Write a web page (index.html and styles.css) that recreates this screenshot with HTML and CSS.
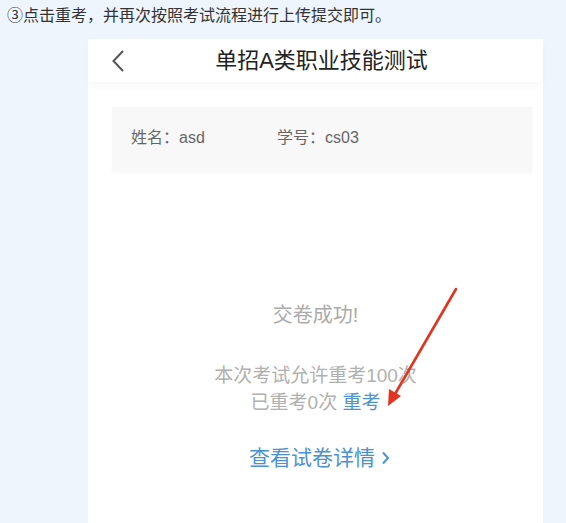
FILE: index.html
```html
<!DOCTYPE html>
<html lang="zh-CN">
<head>
  <meta charset="UTF-8" />
  <meta name="viewport" content="width=device-width, initial-scale=1.0" />
  <title>重考说明</title>
  <link rel="stylesheet" href="styles.css">
</head>
<body>
  <p class="caption">③点击重考，并再次按照考试流程进行上传提交即可。</p>

  <div class="phone">
    <header class="top-bar">
      <a href="#" class="back" title="返回">
        <svg width="12" height="22" viewBox="0 0 12 22"><polyline points="11,1 1.5,11 11,21" fill="none" stroke="#555" stroke-width="2"/></svg>
      </a>
      <h1 class="title">单招A类职业技能测试</h1>
    </header>

    <div class="info-card">
      <span class="info-item">姓名：asd</span>
      <span class="info-item">学号：cs03</span>
    </div>

    <section class="result">
      <p class="result-title">交卷成功!</p>
      <p class="retake-text">本次考试允许重考100次</p>
      <p class="retake-text">已重考0次 <a href="#" class="retake-link">重考</a></p>
      <a href="#" class="detail-link">查看试卷详情
        <svg width="9" height="14" viewBox="0 0 9 14"><polyline points="2,1.5 7,7 2,12.5" fill="none" stroke="#4b92cf" stroke-width="2"/></svg>
      </a>
    </section>

    <!-- red annotation arrow -->
    <svg class="arrow" width="566" height="523" viewBox="0 0 566 523">
      <line x1="456" y1="289" x2="395" y2="394" stroke="#e2341f" stroke-width="2.6" stroke-linecap="round"/>
      <polygon points="388,406 389,389 401,396" fill="#e2341f"/>
    </svg>
  </div>
</body>
</html>
```

FILE: styles.css
```css
:root {
  --bg: #eef5fd;
  --text: #333;
  --muted: #aaa;
  --blue: #4b92cf;
  --card: #f8f8f8;
}

body {
  margin: 0;
  background: var(--bg);
  font-family: "Liberation Sans", "Noto Sans CJK SC", sans-serif;
  color: var(--text);
  height: 523px;
  overflow: hidden;
}

.caption {
  margin: 0;
  padding: 6px 7px 0;
  font-size: 16px;
  line-height: 20px;
  color: #333;
}

.phone {
  margin: 13px 23px 0 88px;
  height: 484px;
  background: #fff;
}

.top-bar {
  display: flex;
  align-items: center;
  height: 43px;
  padding-left: 24px;
  box-shadow: 0 5px 9px rgba(0, 0, 0, 0.03);
}

.back {
  display: flex;
  width: 12px;
}

.title {
  flex: 1;
  margin: 0;
  padding-right: 24px;
  text-align: center;
  font-size: 22px;
  font-weight: normal;
  color: #222;
  line-height: 43px;
}

.info-card {
  display: flex;
  box-sizing: border-box;
  margin: 25px 11px 0 24px;
  height: 65px;
  padding: 0 0 7px 19px;
  align-items: center;
  background: var(--card);
  box-shadow: 0 1px 4px rgba(0, 0, 0, 0.03);
}

.info-item {
  font-size: 16px;
  color: #666;
  width: 146px;
}

.result {
  text-align: center;
  padding-top: 129px;
}

.result p {
  margin: 0;
}

.result-title {
  font-size: 20px;
  line-height: 28px;
  color: var(--muted);
  margin-bottom: 33px !important;
}

.retake-text {
  font-size: 19px;
  line-height: 27px;
  color: #b0b0b0;
}

.retake-link {
  color: var(--blue);
  text-decoration: none;
}

.detail-link {
  display: inline-flex;
  align-items: center;
  gap: 6px;
  margin: 27px 0 0 8px;
  font-size: 21px;
  line-height: 30px;
  color: var(--blue);
  text-decoration: none;
}

.arrow {
  position: absolute;
  top: 0;
  left: 0;
  pointer-events: none;
}
```
